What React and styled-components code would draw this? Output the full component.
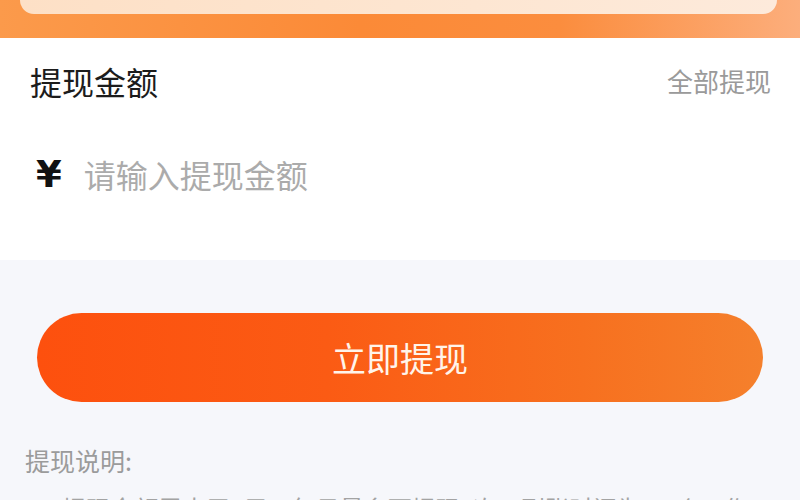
import React from 'react'
import styled, { createGlobalStyle } from 'styled-components'

const GlobalStyle = createGlobalStyle`
  html, body {
    margin: 0;
    padding: 0;
    background: #f6f7fb;
  }
  body {
    font-family: "Noto Sans CJK SC", "Noto Sans", sans-serif;
  }
`

const Page = styled.div`
  width: 800px;
  height: 500px;
  overflow: hidden;
  display: flex;
  flex-direction: column;
  background: #f6f7fb;

  & > * {
    flex-shrink: 0;
  }
`

const Banner = styled.div`
  height: 38px;
  padding: 0 23px 0 20px;
  background: linear-gradient(90deg, #fb9a4b 0%, #fb8a37 45%, #fb8d3e 70%, #fcae7c 100%);
  display: flex;
  flex-direction: column;
`

const BalanceCard = styled.div`
  height: 14px;
  border-radius: 0 0 14px 14px;
  background: linear-gradient(90deg, #fde0c6 0%, #fde6d2 60%, #fdeadb 100%);
`

const FormSection = styled.div`
  background: #fff;
  padding: 0 29px 36px 30px;
  display: flex;
  flex-direction: column;
`

const TitleRow = styled.div`
  height: 86px;
  display: flex;
  align-items: center;
  justify-content: space-between;
`

const Title = styled.div`
  font-size: 32px;
  line-height: 1;
  color: #1c1c1c;
`

const AllLink = styled.div`
  font-size: 26px;
  line-height: 1;
  color: #9a9a9a;
`

const InputRow = styled.div`
  height: 100px;
  display: flex;
  align-items: center;
  gap: 22px;
  padding-left: 6px;
`

const Currency = styled.span`
  font-family: "DejaVu Sans", sans-serif;
  font-weight: 700;
  font-size: 37px;
  line-height: 1;
  color: #111;
`

const AmountInput = styled.input`
  flex: 1;
  border: none;
  outline: none;
  background: transparent;
  padding: 0;
  font-family: "Noto Sans CJK SC", sans-serif;
  font-size: 32px;
  line-height: 1.2;
  color: #222;

  &::placeholder {
    color: #ababab;
  }
`

const Actions = styled.div`
  padding: 53px 37px 0 37px;
`

const SubmitButton = styled.button`
  display: block;
  width: 100%;
  height: 89px;
  border: none;
  border-radius: 45px;
  background: linear-gradient(90deg, #fd500e 0%, #fb5b14 40%, #f7701f 75%, #f5802c 100%);
  color: #fff4ea;
  font-family: "Noto Sans CJK SC", sans-serif;
  font-size: 34px;
  cursor: pointer;
`

const Notes = styled.div`
  padding: 40px 25px 0 25px;
  color: #9b9b9b;
`

const NotesTitle = styled.div`
  font-size: 25px;
  line-height: 36px;
`

const NoteLine = styled.div`
  margin-top: 12px;
  font-size: 24px;
  line-height: 36px;
  color: #a3a3a3;
`

function App() {
  return (
    <Page>
      <GlobalStyle />
      <Banner>
        <BalanceCard />
      </Banner>
      <FormSection>
        <TitleRow>
          <Title>提现金额</Title>
          <AllLink>全部提现</AllLink>
        </TitleRow>
        <InputRow>
          <Currency>¥</Currency>
          <AmountInput placeholder="请输入提现金额" />
        </InputRow>
      </FormSection>
      <Actions>
        <SubmitButton>立即提现</SubmitButton>
      </Actions>
      <Notes>
        <NotesTitle>提现说明:</NotesTitle>
        <NoteLine>1、提现金额需大于1元，每日最多可提现3次，到账时间为1-3个工作日。</NoteLine>
      </Notes>
    </Page>
  )
}

export default App
